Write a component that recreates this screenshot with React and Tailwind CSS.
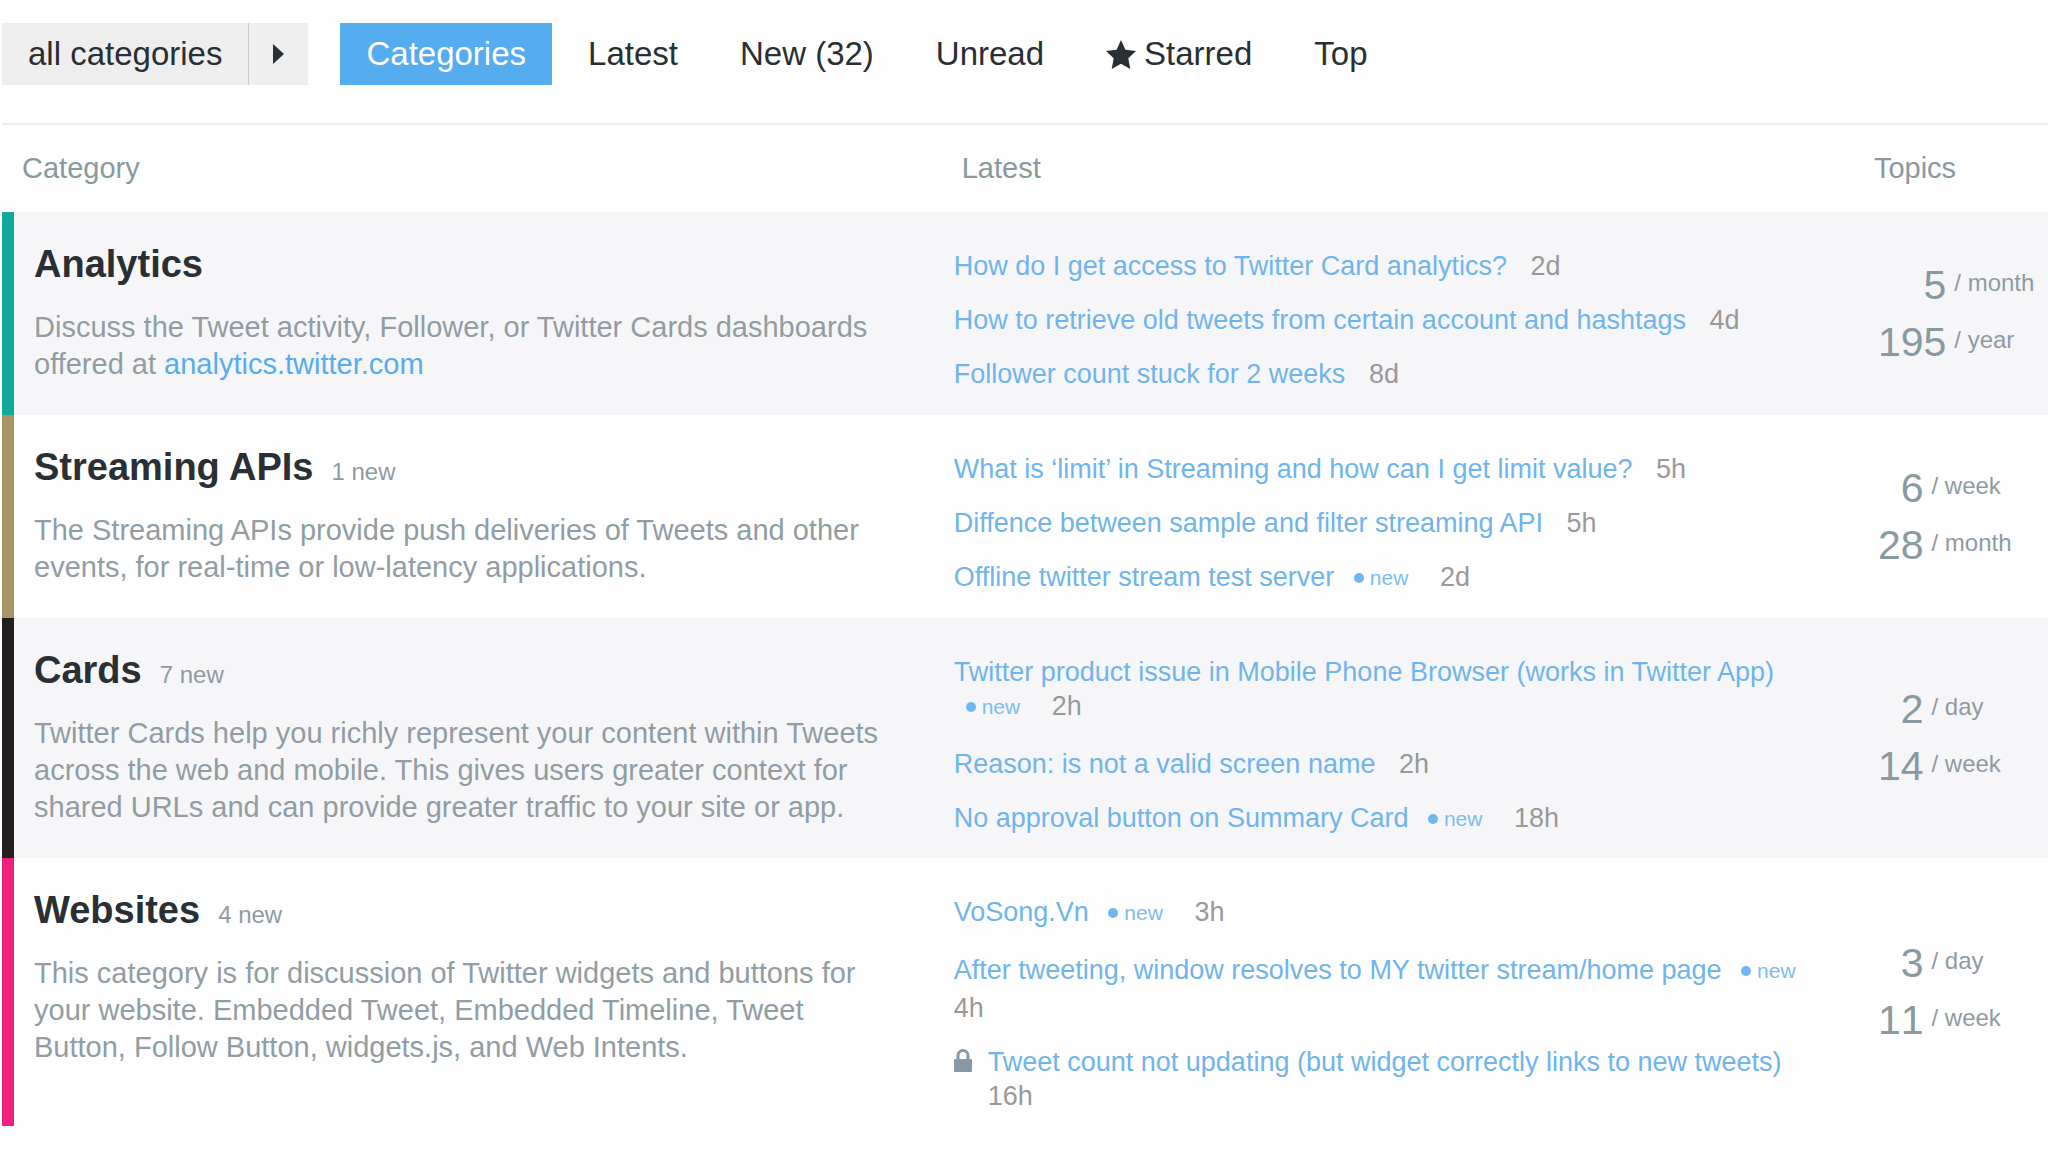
import React from "react";

const navItems = [
  { label: "Categories", active: true },
  { label: "Latest" },
  { label: "New (32)" },
  { label: "Unread" },
  { label: "Starred", icon: true },
  { label: "Top" },
];

const categories = [
  {
    name: "Analytics",
    border: "border-[#12a89d]",
    description: (
      <>
        Discuss the Tweet activity, Follower, or Twitter Cards dashboards
        offered at{" "}
        <a href="#analytics" className="text-[#55acee]">
          analytics.twitter.com
        </a>
      </>
    ),
    topics: [
      { title: "How do I get access to Twitter Card analytics?", age: "2d" },
      {
        title: "How to retrieve old tweets from certain account and hashtags",
        age: "4d",
      },
      { title: "Follower count stuck for 2 weeks", age: "8d" },
    ],
    stats: [
      { count: 5, unit: "month" },
      { count: 195, unit: "year" },
    ],
  },
  {
    name: "Streaming APIs",
    newCount: 1,
    border: "border-[#ab9364]",
    description:
      "The Streaming APIs provide push deliveries of Tweets and other events, for real-time or low-latency applications.",
    topics: [
      {
        title: "What is ‘limit’ in Streaming and how can I get limit value?",
        age: "5h",
      },
      {
        title: "Diffence between sample and filter streaming API",
        age: "5h",
      },
      { title: "Offline twitter stream test server", age: "2d", isNew: true },
    ],
    stats: [
      { count: 6, unit: "week" },
      { count: 28, unit: "month" },
    ],
  },
  {
    name: "Cards",
    newCount: 7,
    border: "border-[#231f20]",
    description:
      "Twitter Cards help you richly represent your content within Tweets across the web and mobile. This gives users greater context for shared URLs and can provide greater traffic to your site or app.",
    topics: [
      {
        title: "Twitter product issue in Mobile Phone Browser (works in Twitter App)",
        age: "2h",
        isNew: true,
      },
      { title: "Reason: is not a valid screen name", age: "2h" },
      { title: "No approval button on Summary Card", age: "18h", isNew: true },
    ],
    stats: [
      { count: 2, unit: "day" },
      { count: 14, unit: "week" },
    ],
  },
  {
    name: "Websites",
    newCount: 4,
    border: "border-[#ed207b]",
    description:
      "This category is for discussion of Twitter widgets and buttons for your website. Embedded Tweet, Embedded Timeline, Tweet Button, Follow Button, widgets.js, and Web Intents.",
    topics: [
      { title: "VoSong.Vn", age: "3h", isNew: true },
      {
        title: "After tweeting, window resolves to MY twitter stream/home page",
        age: "4h",
        isNew: true,
      },
      {
        title: "Tweet count not updating (but widget correctly links to new tweets)",
        age: "16h",
        locked: true,
      },
    ],
    stats: [
      { count: 3, unit: "day" },
      { count: 11, unit: "week" },
    ],
  },
];

const StarIcon = () => (
  <svg viewBox="0 0 30 29" className="w-[30px] h-[29px]" fill="currentColor">
    <path d="M15 0l4.400 9.700L30 11l-7.700 7.300L24.300 29 15 23.800 5.700 29l2-10.700L0 11l10.600-1.300z" />
  </svg>
);

const LockIcon = () => (
  <svg
    viewBox="0 0 18 23"
    className="w-[18px] h-[23px] mt-1 shrink-0"
    fill="#8899a6"
  >
    <path d="M1 10h1.500V6.500a6.500 6.500 0 0 1 13 0V10H17a1 1 0 0 1 1 1v11a1 1 0 0 1-1 1H1a1 1 0 0 1-1-1V11a1 1 0 0 1 1-1zm4.500 0h7V6.500a3.500 3.500 0 0 0-7 0z" />
  </svg>
);

const Topic = ({ topic }) => (
  <li className="flex gap-4">
    {topic.locked && <LockIcon />}
    <div>
      <a
        href="#topic"
        className={topic.isNew ? "text-[#70b4ec]" : "text-[#70b4ec] mr-4"}
      >
        {topic.title}
      </a>{" "}
      {topic.isNew && (
        <>
          <a
            href="#new"
            className="inline-block ml-3 mr-6 pb-[3px] align-[1px] text-[21px] text-[#7cbcf0]"
          >
            <span className="inline-block size-[10px] mr-[6px] align-[2px] rounded-full bg-[#6fb8ef]" />
            new
          </a>{" "}
        </>
      )}
      <span className="text-[#999]">{topic.age}</span>
    </div>
  </li>
);

const App = () => {
  return (
    <div
      className="min-h-screen bg-[#fefefe] pl-[2px] text-[#292f33]"
      style={{ fontFamily: '"Liberation Sans", Arial, sans-serif' }}
    >
      {/* Navigation */}
      <header className="flex items-center gap-8 pt-[23px] pb-[38px] text-[33px] leading-[62px]">
        <div className="flex bg-[#eee]">
          <button className="px-[26px] border-r border-[#ccc]">
            all categories
          </button>
          <button
            aria-label="Show categories"
            className="w-[59px] flex items-center justify-center"
          >
            <svg viewBox="0 0 11 20" className="w-[11px] h-5" fill="#292f33">
              <path d="M0 0l11 10L0 20z" />
            </svg>
          </button>
        </div>
        <nav className="flex gap-[10px]">
          {navItems.map((item) => (
            <a
              key={item.label}
              href="#nav"
              className={
                item.active
                  ? "px-[26px] bg-[#55acee] text-white"
                  : "px-[26px] flex items-center gap-2"
              }
            >
              {item.icon && <StarIcon />}
              {item.label}
            </a>
          ))}
        </nav>
      </header>

      {/* Category list */}
      <table className="w-full table-fixed border-separate border-spacing-0 border-t-2 border-[#ececf0] text-left">
        <thead>
          <tr className="h-[87px] text-[29px] text-[#8899a0]">
            <th className="w-[45%] pl-5 font-normal">Category</th>
            <th className="pl-[39px] font-normal">Latest</th>
            <th className="w-[9%] pl-[10px] font-normal">Topics</th>
          </tr>
        </thead>
        <tbody>
          {categories.map((category) => (
            <tr key={category.name} className="align-top odd:bg-[#f6f6f9]">
              <td
                className={`border-l-12 pl-5 pr-8 pt-[30px] pb-8 ${category.border}`}
              >
                <h3 className="flex items-baseline gap-[18px] text-[38px] leading-[44px] font-bold">
                  {category.name}
                  {category.newCount && (
                    <span className="text-[24px] leading-6 font-normal text-[#8f9ba1]">
                      {category.newCount} new
                    </span>
                  )}
                </h3>
                <p className="mt-[23px] text-[29px] leading-[37px] text-[#919da3]">
                  {category.description}
                </p>
              </td>
              <td className="pl-[31px] pr-4 pt-[37px] pb-[13px]">
                <ul className="flex flex-col gap-5 text-[27px] leading-[34px]">
                  {category.topics.map((topic) => (
                    <Topic key={topic.title} topic={topic} />
                  ))}
                </ul>
              </td>
              <td className="pl-[14px] align-middle text-[#8f9ba1]">
                <dl className="grid grid-cols-[auto_1fr] gap-x-2 [font-kerning:none]">
                  {category.stats.map((stat) => (
                    <React.Fragment key={stat.unit}>
                      <dt className="text-right text-[41px] leading-[57px] text-[#8899a0]">
                        {stat.count}
                      </dt>
                      <dd className="text-[24px] leading-[52px] whitespace-nowrap">
                        / {stat.unit}
                      </dd>
                    </React.Fragment>
                  ))}
                </dl>
              </td>
            </tr>
          ))}
        </tbody>
      </table>
    </div>
  );
};

export default App;
